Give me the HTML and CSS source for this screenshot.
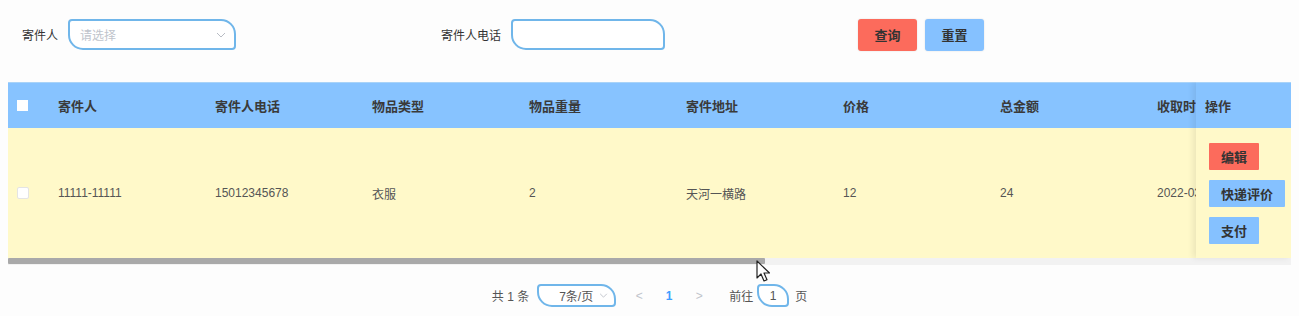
FILE: index.html
```html
<!DOCTYPE html>
<html lang="zh">
<head>
<meta charset="utf-8">
<title>寄件管理</title>
<link rel="stylesheet" href="styles.css">
</head>
<body>
<div class="page">
  <form class="search">
    <div class="field field-sender">
      <span class="label">寄件人</span>
      <div class="leaf-box select-box">
        <span class="placeholder">请选择</span>
        <svg class="chevron" width="10" height="6" viewBox="0 0 10 6"><path d="M1 1l4 4 4-4" fill="none" stroke="#b8bcc4" stroke-width="1"/></svg>
      </div>
    </div>
    <div class="field field-phone">
      <span class="label">寄件人电话</span>
      <div class="leaf-box phone-box"></div>
    </div>
    <div class="actions">
      <button type="button" class="btn btn-red">查询</button>
      <button type="button" class="btn btn-blue">重置</button>
    </div>
  </form>

  <div class="table">
    <div class="scroll">
      <div class="row head">
        <div class="cell sel"><span class="check check-head"></span></div>
        <div class="cell">寄件人</div>
        <div class="cell">寄件人电话</div>
        <div class="cell">物品类型</div>
        <div class="cell">物品重量</div>
        <div class="cell">寄件地址</div>
        <div class="cell">价格</div>
        <div class="cell">总金额</div>
        <div class="cell">收取时间</div>
      </div>
      <div class="row body">
        <div class="cell sel"><span class="check"></span></div>
        <div class="cell">11111-11111</div>
        <div class="cell">15012345678</div>
        <div class="cell">衣服</div>
        <div class="cell">2</div>
        <div class="cell">天河一横路</div>
        <div class="cell">12</div>
        <div class="cell">24</div>
        <div class="cell">2022-03-15 10:00</div>
      </div>
    </div>
    <div class="scrollbar"><div class="thumb"></div></div>

    <div class="fixed-col">
      <div class="fixed-head">操作</div>
      <div class="fixed-body">
        <button type="button" class="op op-red">编辑</button>
        <button type="button" class="op op-blue">快递评价</button>
        <button type="button" class="op op-blue">支付</button>
      </div>
    </div>
  </div>

  <div class="pager">
    <span class="total">共 1 条</span>
    <div class="leaf-box size-box">
      <span>7条/页</span>
      <svg class="chevron" width="9" height="5" viewBox="0 0 10 6"><path d="M1 1l4 4 4-4" fill="none" stroke="#b8bcc4" stroke-width="1"/></svg>
    </div>
    <span class="nav">&lt;</span>
    <span class="num">1</span>
    <span class="nav">&gt;</span>
    <span class="goto">前往</span>
    <div class="leaf-box jump-box">1</div>
    <span class="unit">页</span>
  </div>

  <svg class="cursor" width="14" height="22" viewBox="0 0 14 22"><path d="M1 1v17l4-4 3 7 3-1.3-3-6.7h5.5z" fill="#fff" stroke="#222" stroke-width="1.2" stroke-linejoin="round"/></svg>
</div>
</body>
</html>
```

FILE: styles.css
```css
* { box-sizing: border-box; }
html, body { margin: 0; padding: 0; background: #fdfdfd; }
body {
  font-family: "Liberation Sans", "Noto Sans CJK SC", sans-serif;
  color: #333;
  width: 1299px;
  height: 316px;
  overflow: hidden;
}
.page { padding: 0 8px; position: relative; height: 316px; }

/* search bar */
.search {
  display: flex;
  align-items: center;
  padding: 19px 0 0 14px;
  height: 50px;
}
.field { display: flex; align-items: center; }
.label { font-size: 12px; color: #333; margin-right: 10px; white-space: nowrap; }
.field-sender { width: 419px; }
.field-phone { width: 417px; }
.leaf-box {
  border: 2px solid #70b6ea;
  border-radius: 4px 15px 4px 15px;
  background: #fff;
  display: flex;
  align-items: center;
}
.select-box { width: 168px; height: 31px; padding: 0 8px 0 10px; justify-content: space-between; }
.placeholder { font-size: 12px; color: #c0c4cc; }
.phone-box { width: 154px; height: 31px; }
.actions { display: flex; gap: 8px; }
.btn {
  border: none;
  border-radius: 3px;
  height: 32px;
  width: 59px;
  font-family: inherit;
  font-size: 13px;
  font-weight: bold;
  color: #333;
  box-shadow: 0 0 2px rgba(0,0,0,0.12);
}
.btn-red { background: #fc6b5c; }
.btn-blue { background: #85c1ff; }

/* table */
.table { position: relative; margin-top: 32px; width: 1283px; overflow: hidden; }
.scroll { overflow: hidden; width: 1283px; }
.row {
  display: grid;
  grid-template-columns: 40px repeat(7, 157px) 200px;
  width: max-content;
}
.head { background: #87c3ff; height: 46px; border-top: 1px solid #a9d3f8; }
.body { background: #fff9c9; height: 130px; }
.cell {
  display: flex;
  align-items: center;
  padding-left: 10px;
  white-space: nowrap;
  overflow: hidden;
}
.head .cell { font-size: 13px; font-weight: bold; color: #3a3a3a; }
.body .cell { font-size: 12px; color: #555; }
.cell.sel { padding-left: 9px; }
.check {
  width: 12px; height: 12px;
  background: #fff;
  border: 1px solid #e4e4e4;
  border-radius: 2px;
}
.check-head { width: 11px; height: 11px; border: none; border-radius: 0; }
.scrollbar { height: 7px; background: #f2f2f2; width: 1283px; }
.thumb { width: 757px; height: 6px; background: #a9a9a9; border-radius: 1px; }

.fixed-col {
  position: absolute;
  top: 0;
  right: 0;
  width: 95px;
  box-shadow: -3px 0 6px rgba(0,0,0,0.08);
}
.fixed-head {
  height: 46px;
  background: #87c3ff;
  border-top: 1px solid #a9d3f8;
  font-size: 13px;
  font-weight: bold;
  color: #3a3a3a;
  display: flex;
  align-items: center;
  padding-left: 9px;
}
.fixed-body {
  height: 130px;
  background: #fff9c9;
  display: flex;
  flex-direction: column;
  align-items: flex-start;
  gap: 10px;
  padding: 15px 0 0 13px;
}
.op {
  border: none;
  height: 27px;
  padding: 0 12px;
  font-family: inherit;
  font-size: 13px;
  font-weight: bold;
  color: #333;
  border-radius: 1px;
}
.op-red { background: #fc6b5c; }
.op-blue { background: #85c1ff; }

.cursor { position: absolute; left: 756px; top: 260px; }

/* pagination */
.pager {
  display: flex;
  align-items: center;
  justify-content: center;
  padding-top: 19px;
  font-size: 12px;
  color: #555;
}
.total { margin-right: 8px; }
.size-box { width: 79px; height: 23px; justify-content: space-between; padding: 0 6px 0 20px; font-size: 12px; color: #555; }
.nav { width: 30px; text-align: center; color: #c0c4cc; }
.size-box + .nav { margin-left: 8px; }
.num { width: 30px; text-align: center; color: #409eff; font-weight: bold; }
.goto { margin-left: 15px; margin-right: 4px; }
.jump-box { width: 32px; height: 23px; justify-content: center; font-size: 12px; color: #555; }
.unit { margin-left: 6px; }
```
